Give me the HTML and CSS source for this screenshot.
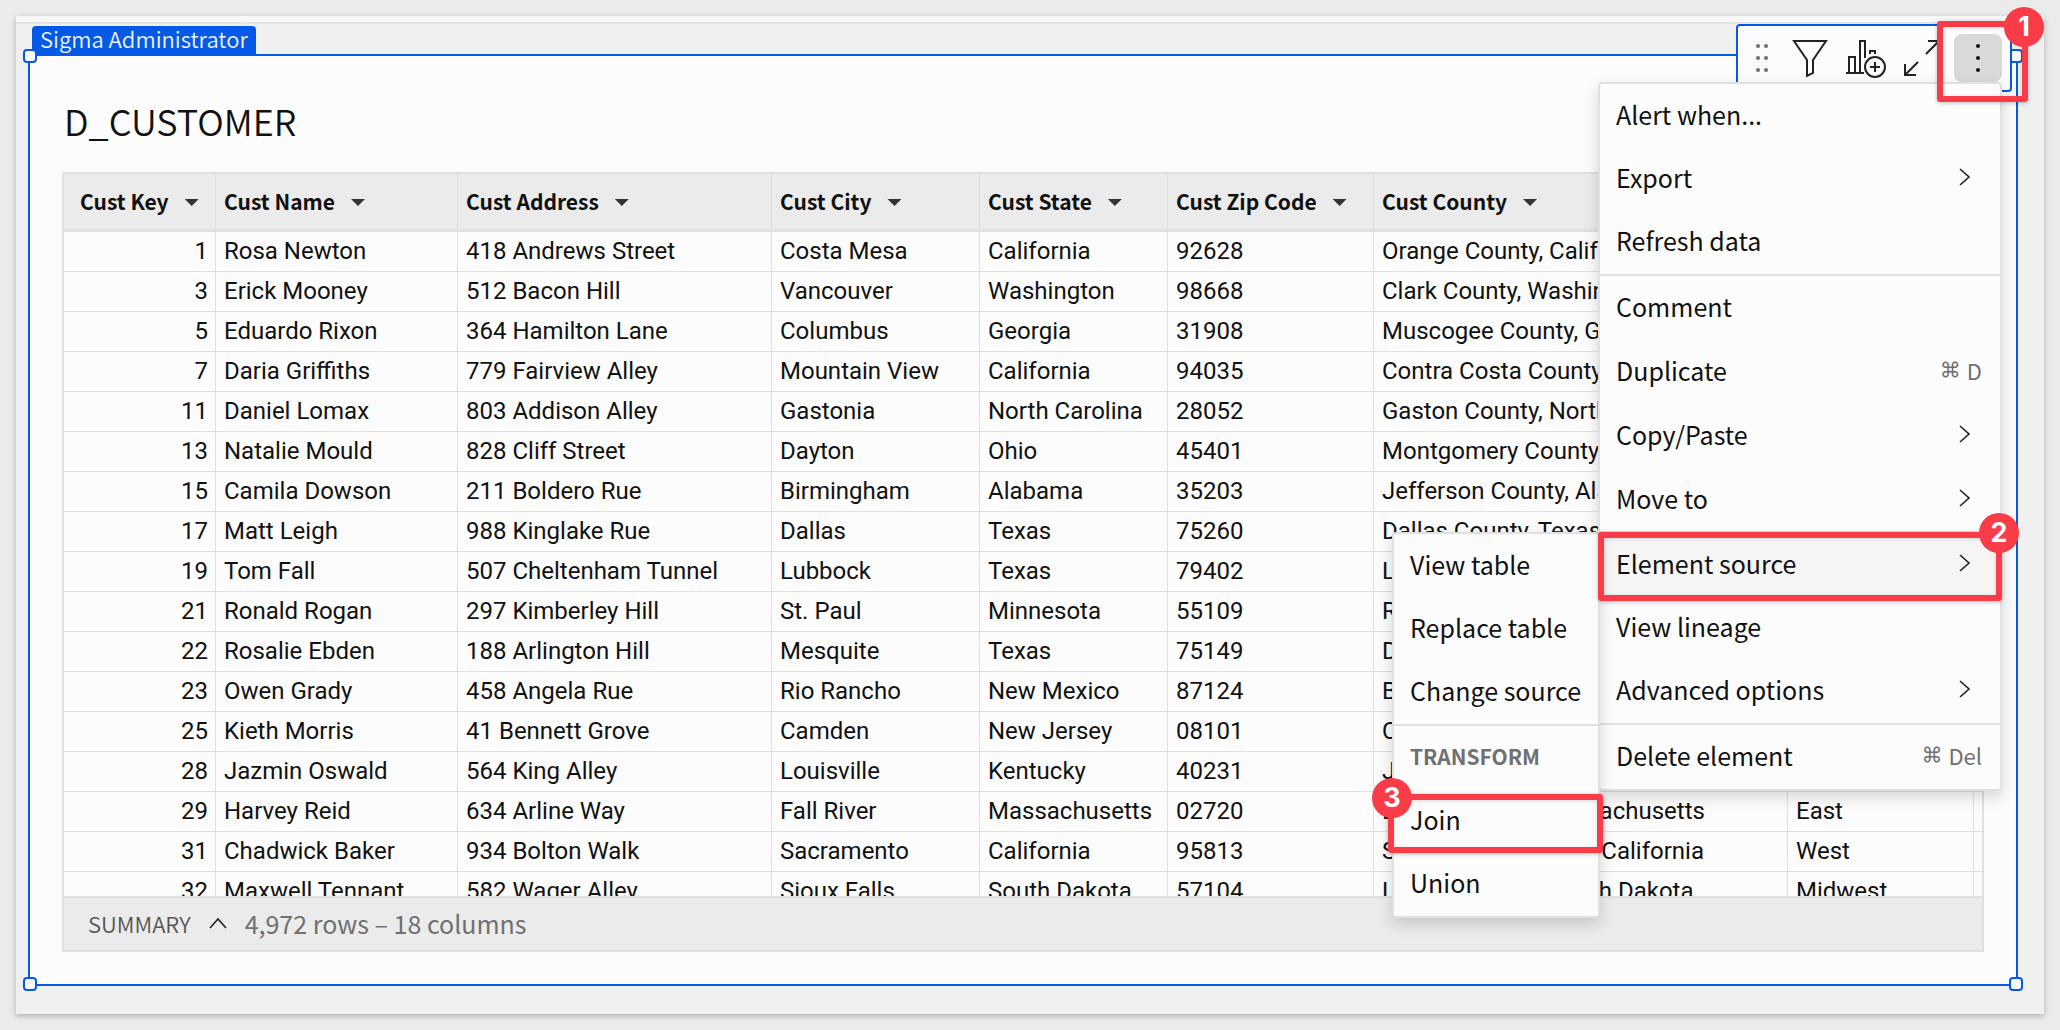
FILE: index.html
```html
<!DOCTYPE html>
<html lang="en">
<head>
<meta charset="utf-8">
<title>D_CUSTOMER</title>
<link rel="stylesheet" href="styles.css">
</head>
<body>
<main class="sheet">
  <section class="element">
    <span class="owner">Sigma Administrator</span>
    <i class="handle handle-tl"></i><i class="handle handle-tr"></i>
    <i class="handle handle-bl"></i><i class="handle handle-br"></i>

    <h1 class="title">D_CUSTOMER</h1>

    <div class="grid">
      <div class="rows">
        <table class="data">
          <colgroup>
            <col class="c-key"><col class="c-name"><col class="c-address"><col class="c-city"><col class="c-state"><col class="c-zip"><col class="c-county"><col class="c-region"><col>
          </colgroup>
          <thead>
            <tr>
              <th class="first" scope="col">Cust Key<button class="sort" aria-label="Cust Key options"></button></th>
              <th scope="col">Cust Name<button class="sort" aria-label="Cust Name options"></button></th>
              <th scope="col">Cust Address<button class="sort" aria-label="Cust Address options"></button></th>
              <th scope="col">Cust City<button class="sort" aria-label="Cust City options"></button></th>
              <th scope="col">Cust State<button class="sort" aria-label="Cust State options"></button></th>
              <th scope="col">Cust Zip Code<button class="sort" aria-label="Cust Zip Code options"></button></th>
              <th scope="col">Cust County<button class="sort" aria-label="Cust County options"></button></th>
              <th scope="col"></th>
              <th scope="col"></th>
            </tr>
          </thead>
          <tbody>
            <tr><td>1</td><td>Rosa Newton</td><td>418 Andrews Street</td><td>Costa Mesa</td><td>California</td><td>92628</td><td>Orange County, California</td><td></td><td></td></tr>
            <tr><td>3</td><td>Erick Mooney</td><td>512 Bacon Hill</td><td>Vancouver</td><td>Washington</td><td>98668</td><td>Clark County, Washington</td><td></td><td></td></tr>
            <tr><td>5</td><td>Eduardo Rixon</td><td>364 Hamilton Lane</td><td>Columbus</td><td>Georgia</td><td>31908</td><td>Muscogee County, Georgia</td><td></td><td></td></tr>
            <tr><td>7</td><td>Daria Griffiths</td><td>779 Fairview Alley</td><td>Mountain View</td><td>California</td><td>94035</td><td>Contra Costa County, California</td><td></td><td></td></tr>
            <tr><td>11</td><td>Daniel Lomax</td><td>803 Addison Alley</td><td>Gastonia</td><td>North Carolina</td><td>28052</td><td>Gaston County, North Carolina</td><td></td><td></td></tr>
            <tr><td>13</td><td>Natalie Mould</td><td>828 Cliff Street</td><td>Dayton</td><td>Ohio</td><td>45401</td><td>Montgomery County, Ohio</td><td></td><td></td></tr>
            <tr><td>15</td><td>Camila Dowson</td><td>211 Boldero Rue</td><td>Birmingham</td><td>Alabama</td><td>35203</td><td>Jefferson County, Alabama</td><td></td><td></td></tr>
            <tr><td>17</td><td>Matt Leigh</td><td>988 Kinglake Rue</td><td>Dallas</td><td>Texas</td><td>75260</td><td>Dallas County, Texas</td><td></td><td></td></tr>
            <tr><td>19</td><td>Tom Fall</td><td>507 Cheltenham Tunnel</td><td>Lubbock</td><td>Texas</td><td>79402</td><td>Lubbock County, Texas</td><td></td><td></td></tr>
            <tr><td>21</td><td>Ronald Rogan</td><td>297 Kimberley Hill</td><td>St. Paul</td><td>Minnesota</td><td>55109</td><td>Ramsey County, Minnesota</td><td></td><td></td></tr>
            <tr><td>22</td><td>Rosalie Ebden</td><td>188 Arlington Hill</td><td>Mesquite</td><td>Texas</td><td>75149</td><td>Dallas County, Texas</td><td></td><td></td></tr>
            <tr><td>23</td><td>Owen Grady</td><td>458 Angela Rue</td><td>Rio Rancho</td><td>New Mexico</td><td>87124</td><td>Bernalillo County, New Mexico</td><td></td><td></td></tr>
            <tr><td>25</td><td>Kieth Morris</td><td>41 Bennett Grove</td><td>Camden</td><td>New Jersey</td><td>08101</td><td>Camden County, New Jersey</td><td></td><td></td></tr>
            <tr><td>28</td><td>Jazmin Oswald</td><td>564 King Alley</td><td>Louisville</td><td>Kentucky</td><td>40231</td><td>Jefferson County, Kentucky</td><td></td><td></td></tr>
            <tr><td>29</td><td>Harvey Reid</td><td>634 Arline Way</td><td>Fall River</td><td>Massachusetts</td><td>02720</td><td>Bristol County, Massachusetts</td><td>East</td><td></td></tr>
            <tr><td>31</td><td>Chadwick Baker</td><td>934 Bolton Walk</td><td>Sacramento</td><td>California</td><td>95813</td><td>Sacramento County, California</td><td>West</td><td></td></tr>
            <tr><td>32</td><td>Maxwell Tennant</td><td>582 Wager Alley</td><td>Sioux Falls</td><td>South Dakota</td><td>57104</td><td>Lincoln County, South Dakota</td><td>Midwest</td><td></td></tr>
          </tbody>
        </table>
      </div>
      <footer class="summary">
        <button class="summary-toggle">SUMMARY
          <svg width="18" height="12" viewBox="0 0 18 12"><path d="M1 11 9 2l8 9"/></svg>
        </button>
        <span>4,972 rows – 18 columns</span>
      </footer>
    </div>

    <div class="toolbar">
      <button class="tool tool-narrow" aria-label="Drag"><svg class="dots" width="32" height="48" viewBox="8 0 32 48"><circle cx="20" cy="12" r="2"/><circle cx="28" cy="12" r="2"/><circle cx="20" cy="24" r="2"/><circle cx="28" cy="24" r="2"/><circle cx="20" cy="36" r="2"/><circle cx="28" cy="36" r="2"/></svg></button>
      <button class="tool" aria-label="Filter"><svg width="48" height="48" viewBox="0 0 48 48"><path d="M8 7h32L27 26v13L21 42V26z"/></svg></button>
      <button class="tool" aria-label="Add chart"><svg width="48" height="48" viewBox="0 0 48 48"><path d="M4 39h18M7 39V23h6v16M18 39V7h5v17M28 20v-3h5v3"/><circle cx="33" cy="33" r="10" fill="#fcfcfc"/><path d="M33 28v10M28 33h10"/></svg></button>
      <button class="tool" aria-label="Maximize"><svg width="48" height="48" viewBox="0 0 48 48"><path d="M28 20 41 7M30 7h11v11M20 28 7 41M7 30v11h11"/></svg></button>
      <div class="more">
        <button class="tool tool-active" aria-label="More"><svg class="dots dots-dark" width="48" height="48" viewBox="0 0 48 48"><circle cx="24" cy="12" r="2"/><circle cx="24" cy="24" r="2"/><circle cx="24" cy="36" r="2"/></svg></button>

        <div class="menu main-menu">
          <div class="group">
            <button class="item">Alert when...</button>
            <button class="item">Export<svg class="chev" width="12" height="18" viewBox="0 0 12 18"><path d="m1 1 9 8-9 8"/></svg></button>
            <button class="item">Refresh data</button>
          </div>
          <div class="group group-loose">
            <button class="item">Comment</button>
            <button class="item">Duplicate<kbd><span class="cmd">⌘</span>D</kbd></button>
            <button class="item">Copy/Paste<svg class="chev" width="12" height="18" viewBox="0 0 12 18"><path d="m1 1 9 8-9 8"/></svg></button>
            <button class="item">Move to<svg class="chev" width="12" height="18" viewBox="0 0 12 18"><path d="m1 1 9 8-9 8"/></svg></button>
          </div>
          <div class="group">
            <div class="parent">
              <button class="item item-open">Element source<svg class="chev" width="12" height="18" viewBox="0 0 12 18"><path d="m1 1 9 8-9 8"/></svg></button>
              <div class="menu sub-menu">
                <div class="group">
                  <button class="item">View table</button>
                  <button class="item">Replace table</button>
                  <button class="item">Change source</button>
                </div>
                <div class="group">
                  <div class="item heading">TRANSFORM</div>
                  <div class="parent">
                    <button class="item">Join</button>
                    <div class="callout callout-3"><b class="badge">3</b></div>
                  </div>
                  <button class="item">Union</button>
                </div>
              </div>
              <div class="callout callout-2"><b class="badge">2</b></div>
            </div>
            <button class="item">View lineage</button>
            <button class="item">Advanced options<svg class="chev" width="12" height="18" viewBox="0 0 12 18"><path d="m1 1 9 8-9 8"/></svg></button>
          </div>
          <div class="group">
            <button class="item">Delete element<kbd><span class="cmd">⌘</span>Del</kbd></button>
          </div>
        </div>
        <div class="callout callout-1"><b class="badge">1</b></div>
      </div>
    </div>
  </section>
</main>
</body>
</html>
```
FILE: styles.css
```css
:root {
  --ui: "Noto Sans CJK SC", "Noto Sans", sans-serif;
  --blue: #0459e6;
  --line: #e0e0e0;
  --paper: #fcfcfc;
  --ink: #111;
  --muted: #707070;
  --red: #f93c48;
}

* { box-sizing: border-box; }

body {
  margin: 0;
  height: 100vh;
  padding: 16px;
  display: flex;
  background: #ebebeb;
  color: var(--ink);
  font-family: var(--ui);
}

button {
  margin: 0;
  padding: 0;
  border: 0;
  background: none;
  color: inherit;
  font: inherit;
  text-align: left;
}

svg {
  display: block;
  fill: none;
  stroke: #222;
  stroke-width: 2;
}

.sheet {
  flex: 1;
  min-width: 0;
  display: flex;
  padding: 32px 26px 28px 12px;
  border-top: 6px solid #f7f7f7;
  background: #f0f0f0;
  box-shadow: inset 0 2px #e5e5e5, 0 2px 6px rgba(0, 0, 0, .25);
}

.element {
  position: relative;
  flex: 1;
  min-width: 0;
  display: flex;
  flex-direction: column;
  padding: 0 32px 32px;
  border: 2px solid var(--blue);
  background: var(--paper);
}

.owner {
  position: absolute;
  left: 2px;
  bottom: 100%;
  height: 30px;
  padding: 0 8px;
  border-radius: 4px 4px 0 0;
  background: var(--blue);
  color: #eef3fd;
  font-size: 22px;
  font-weight: 350;
  line-height: 25px;
}

.handle {
  position: absolute;
  width: 14px;
  height: 14px;
  border: 2px solid var(--blue);
  border-radius: 4px;
  background: var(--paper);
}
.handle-tl { left: -7px; top: -7px; }
.handle-tr { right: -7px; top: -7px; }
.handle-bl { left: -7px; bottom: -7px; }
.handle-br { right: -7px; bottom: -7px; }

.title {
  margin: 0;
  padding: 40px 0 28px 2px;
  font-size: 36px;
  font-weight: 350;
  line-height: 48px;
}

.grid {
  flex: 1;
  min-height: 0;
  display: flex;
  flex-direction: column;
  border: 2px solid var(--line);
}

.rows {
  flex: 1;
  min-height: 0;
  overflow: hidden;
}

.data {
  width: 100%;
  table-layout: fixed;
  border-collapse: separate;
  border-spacing: 0;
  font-family: Roboto, sans-serif;
  font-size: 24px;
}
.c-key { width: 152px; }
.c-name { width: 242px; }
.c-address { width: 314px; }
.c-city { width: 208px; }
.c-state { width: 188px; }
.c-zip { width: 206px; }
.c-county { width: 414px; }
.c-region { width: 186px; }

th, td {
  padding: 0 7px 2px 8px;
  border-right: 1px solid var(--line);
  overflow: hidden;
  text-align: left;
  white-space: nowrap;
}
th {
  height: 58px;
  padding-bottom: 1px;
  border-bottom: 3px solid var(--line);
  background: #ebebeb;
  font-family: var(--ui);
  font-size: 21px;
  font-weight: 700;
  line-height: 32px;
}
th.first { padding-left: 16px; }
td {
  height: 40px;
  border-bottom: 1px solid var(--line);
  line-height: 32px;
}
td:first-child { text-align: right; }
th:last-child, td:last-child { padding: 0; border-right: 0; }

.sort {
  width: 14px;
  height: 7px;
  margin-left: 16px;
  background: #333;
  clip-path: polygon(0 0, 100% 0, 50% 100%);
  vertical-align: 4px;
}

.summary {
  display: flex;
  align-items: center;
  gap: 18px;
  height: 54px;
  padding: 0 24px 3px;
  border-top: 2px solid var(--line);
  background: #ebebeb;
  color: var(--muted);
  font-size: 25px;
  line-height: 36px;
}
.summary-toggle {
  display: flex;
  align-items: center;
  gap: 18px;
  color: #555;
  font-size: 22px;
  font-weight: 350;
}
.summary-toggle svg { stroke-width: 1.6; }

.toolbar {
  position: absolute;
  right: 4px;
  top: -32px;
  display: flex;
  gap: 8px;
  width: 276px;
  height: 68px;
  padding: 8px;
  border: 2px solid var(--blue);
  border-radius: 4px;
  background: var(--paper);
}
.tool { width: 48px; height: 48px; border-radius: 8px; }
.tool-narrow { width: 32px; }
.tool-active { background: #d9d9d9; }
.dots { fill: #707070; stroke: none; }
.dots-dark { fill: #111; }
.more { position: relative; }

.menu {
  position: absolute;
  border: 2px solid var(--line);
  border-radius: 4px;
  background: var(--paper);
  box-shadow: 0 6px 16px rgba(0, 0, 0, .16);
}
.main-menu { top: 100%; right: 0; width: 404px; }
.sub-menu { top: -1px; right: 100%; width: 208px; }
.group {
  display: flex;
  flex-direction: column;
  padding-bottom: 1px;
}
.group-loose { gap: 1px; padding-bottom: 0; }
.group + .group { border-top: 2px solid var(--line); }
.item {
  display: flex;
  align-items: center;
  justify-content: space-between;
  width: 100%;
  height: 63px;
  padding: 0 18px 4px 16px;
  font-size: 25px;
  line-height: 36px;
  white-space: nowrap;
}
.item-open { background: #f5f5f5; }
.parent { position: relative; }
.heading { color: var(--muted); font-size: 21px; font-weight: 700; }
.item kbd {
  display: flex;
  gap: 6px;
  color: var(--muted);
  font-family: var(--ui);
  font-size: 22px;
}
.cmd { font-family: Inter, "DejaVu Sans", sans-serif; font-size: 21px; }
.chev { margin-right: 11px; stroke-width: 1.6; }

.callout {
  position: absolute;
  border: 6px solid var(--red);
  border-radius: 3px;
  box-shadow: 0 1px 4px rgba(0, 0, 0, .25), inset 0 1px 4px rgba(0, 0, 0, .15);
  pointer-events: none;
}
.callout-1 { inset: -13px -26px -20px -17px; }
.callout-2 { inset: -1px -2px -5px; }
.callout-3 { inset: 5px -5px -1px -6px; }
.badge {
  position: absolute;
  top: -25px;
  right: -23px;
  width: 40px;
  height: 40px;
  border-radius: 50%;
  background: var(--red);
  color: #fff;
  font-family: Inter, sans-serif;
  font-size: 27px;
  font-weight: 700;
  line-height: 39px;
  text-align: center;
}
.callout-1 .badge { top: -20px; right: -22px; }
.callout-3 .badge { top: -22px; right: auto; left: -22px; }
```
